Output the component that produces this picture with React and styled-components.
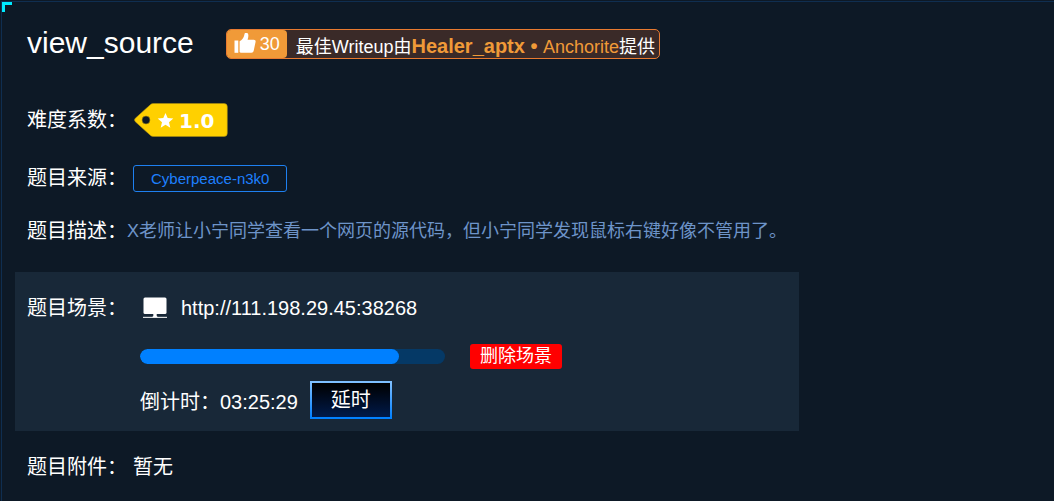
import React from "react";
import styled, { createGlobalStyle } from "styled-components";

const GlobalStyle = createGlobalStyle`
  * {
    box-sizing: border-box;
  }
  body {
    margin: 0;
    background: #0d1926;
    color: #fff;
    font-family: "Liberation Sans", "Noto Sans CJK SC", sans-serif;
    font-size: 20px;
  }
  button {
    font-family: inherit;
    cursor: pointer;
  }
`;

const Card = styled.main`
  position: relative;
  min-height: calc(100vh - 1px);
  margin: 1px 0 0 1px;
  padding: 24px 13px 0;
  border: solid #0f2e50;
  border-width: 1px 0 0 1px;
`;

const Corner = styled.span`
  position: absolute;
  top: 0;
  left: 0;
  width: 10px;
  height: 10px;
  border: solid #00eaff;
  border-width: 3px 0 0 3px;
`;

const Header = styled.header`
  display: flex;
  align-items: center;
  gap: 32px;
  margin-bottom: 30px;
  padding-left: 12px;
`;

const Title = styled.h1`
  margin: 0;
  font-size: 30px;
  font-weight: 400;
  line-height: 34px;
`;

const Writeup = styled.div`
  display: flex;
  align-items: center;
  height: 30px;
  margin-top: 2px;
  border: 1px solid #e87a30;
  border-radius: 5px;
  background: #3a2a28;
  font-size: 18px;
`;

const Likes = styled.button`
  display: flex;
  align-items: center;
  gap: 4px;
  height: 28px;
  padding: 0 7px;
  border: 0;
  border-radius: 4px;
  background: #f09a38;
  color: #fff;
  font-size: 18px;
`;

const Credit = styled.p`
  margin: 0;
  padding: 4px 4px 0 9px;
  line-height: 24px;
  white-space: nowrap;
`;

const Author = styled.a`
  color: #f09a38;
  font-size: ${(props) => (props.$lead ? "20px" : "18px")};
  font-weight: ${(props) => (props.$lead ? 700 : 400)};
  text-decoration: none;
`;

const Details = styled.dl`
  margin: 0;
`;

const Row = styled.div`
  display: flex;
  align-items: center;
  min-height: ${(props) => props.$height}px;
  padding-left: 12px;
`;

const Label = styled.dt`
  flex: none;
  width: 100px;
  line-height: 30px;
  white-space: nowrap;
`;

const Value = styled.dd`
  display: flex;
  align-items: center;
  margin: 0;
  padding-left: ${(props) => props.$indent || 0}px;
  line-height: 30px;
`;

const Source = styled.a`
  padding: 0 17px;
  border: 1px solid #1e80f0;
  border-radius: 3px;
  color: #1e80ff;
  font-size: 15px;
  line-height: 25px;
  text-decoration: none;
`;

const Description = styled.p`
  margin: 0;
  color: #6d94c9;
  font-size: 18px;
  line-height: 28px;
`;

const Scene = styled.div`
  max-width: 784px;
  margin: 16px 0 10px;
  padding: 10px 0 9px;
  background: #182838;
`;

const SceneBody = styled.div`
  display: flex;
  flex-direction: column;
  padding-left: 125px;
`;

const Address = styled.a`
  margin-left: 14px;
  color: #fff;
  text-decoration: none;
`;

const Line = styled.div`
  display: flex;
  align-items: center;
  gap: ${(props) => props.$gap}px;
  min-height: 44px;
`;

const Progress = styled.div`
  flex: 0 1 305px;
  height: 15px;
  border-radius: 8px;
  background: #053966;
  overflow: hidden;
`;

const Bar = styled.div`
  height: 100%;
  border-radius: 8px;
  background: #0080ff;
`;

const DeleteButton = styled.button`
  height: 25px;
  padding: 0 10px;
  border: 0;
  border-radius: 3px;
  background: #f00;
  color: #fff;
  font-size: 18px;
  line-height: 24px;
`;

const DelayButton = styled.button`
  height: 38px;
  padding: 0 19px;
  border: 2px solid;
  border-image: linear-gradient(#80c0ff, #0080ff) 1;
  background: linear-gradient(#000, #001a4a);
  color: #fff;
  font-size: 20px;
  line-height: 32px;
`;

function ThumbIcon() {
  return (
    <svg width="22" height="22" viewBox="0 0 22 22" fill="#fff" aria-hidden="true">
      <path d="M0.5 7.5h3.8v12.3H0.5z" />
      <path d="M5.6 8.2c2.3-1 4.2-3.4 4.7-6.2C10.5 0.2 11.2-0.6 12.4-0.4c2.2 0.5 2.5 3.2 1.2 7.1h6.2c1.3 0 2 0.9 1.8 2.1l-1.9 9c-0.3 1.3-1 2-2.3 2H8.5c-1.300 0-2.1-0.3-2.900-0.9z" />
    </svg>
  );
}

function DifficultyTag({ score }) {
  return (
    <svg width="94" height="34" viewBox="0 0 94 34" role="img" aria-label={score}>
      <path
        fillRule="evenodd"
        fill="#ffd000"
        stroke="#a98d12"
        strokeWidth="0.6"
        d="M1.3 15.3L16.5 1.6Q17.7 0.5 19.3 0.5H90Q93.3 0.5 93.3 3.8V30.2Q93.3 33.5 90 33.5H19.3Q17.7 33.5 16.5 32.4L1.3 18.7Q-0.3 17 1.3 15.3ZM12 13a4 4 0 1 0 0 8a4 4 0 1 0 0-8Z"
      />
      <path
        fill="#fff"
        d="M31.500 10l2.200 5 5.600 0.500-4.300 3.700 1.300 5.500-4.800-2.900-4.800 2.900 1.300-5.500-4.300-3.700 5.600-0.500z"
      />
      <text
        x="45"
        y="25"
        fill="#fff"
        fontFamily="'DejaVu Sans', sans-serif"
        fontSize="20"
        fontWeight="700"
      >
        {score}
      </text>
    </svg>
  );
}

function MonitorIcon() {
  return (
    <svg width="24" height="22" viewBox="0 0 24 22" fill="#fff" aria-hidden="true">
      <rect x="0.5" y="0.5" width="23" height="16.5" rx="1.5" />
      <path d="M10.3 17h3.4v2l1.3 1.2H9l1.3-1.2z" />
      <rect x="0" y="19.8" width="24" height="1.2" opacity="0.85" />
    </svg>
  );
}

function App() {
  const remaining = 85;

  return (
    <Card>
      <GlobalStyle />
      <Corner />
      <Header>
        <Title>view_source</Title>
        <Writeup>
          <Likes type="button">
            <ThumbIcon />
            30
          </Likes>
          <Credit>
            最佳Writeup由
            <Author $lead href="#healer">
              Healer_aptx •{" "}
            </Author>
            <Author href="#anchorite">Anchorite</Author>
            提供
          </Credit>
        </Writeup>
      </Header>

      <Details>
        <Row $height={60}>
          <Label>难度系数：</Label>
          <Value $indent={7}>
            <DifficultyTag score="1.0" />
          </Value>
        </Row>
        <Row $height={56}>
          <Label>题目来源：</Label>
          <Value $indent={6}>
            <Source href="#source">Cyberpeace-n3k0</Source>
          </Value>
        </Row>
        <Row $height={50}>
          <Label>题目描述：</Label>
          <Value>
            <Description>
              X老师让小宁同学查看一个网页的源代码，但小宁同学发现鼠标右键好像不管用了。
            </Description>
          </Value>
        </Row>
        <Scene>
          <Row $height={52}>
            <Label>题目场景：</Label>
            <Value $indent={16}>
              <MonitorIcon />
              <Address href="http://111.198.29.45:38268">http://111.198.29.45:38268</Address>
            </Value>
          </Row>
          <SceneBody>
            <Line $gap={25}>
              <Progress role="progressbar" aria-label="倒计时" aria-valuenow={remaining}>
                <Bar style={{ width: `${remaining}%` }} />
              </Progress>
              <DeleteButton type="button">删除场景</DeleteButton>
            </Line>
            <Line $gap={12}>
              <span>倒计时：03:25:29</span>
              <DelayButton type="button">延时</DelayButton>
            </Line>
          </SceneBody>
        </Scene>
        <Row $height={52}>
          <Label>题目附件：</Label>
          <Value $indent={6}>暂无</Value>
        </Row>
      </Details>
    </Card>
  );
}

export default App;
